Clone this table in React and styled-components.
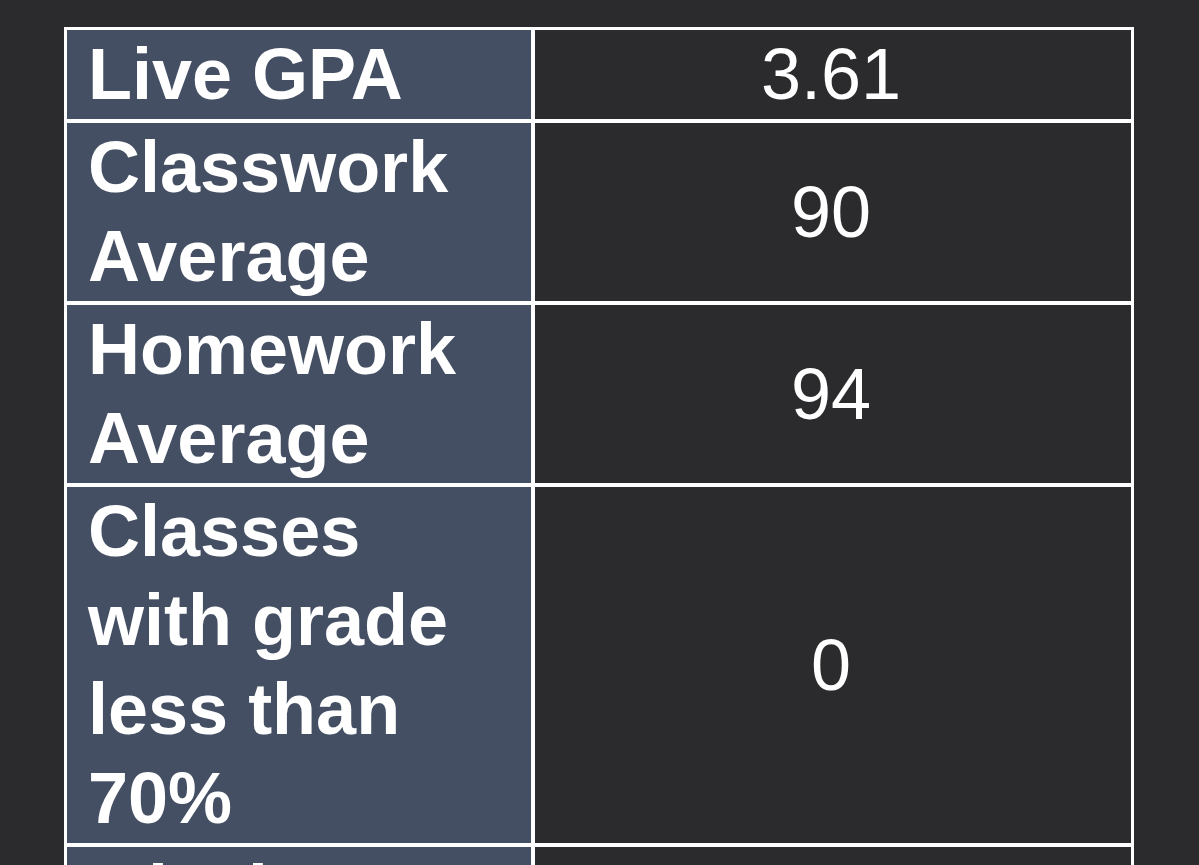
import React from "react";
import styled, { createGlobalStyle } from "styled-components";

const Global = createGlobalStyle`
  html, body {
    margin: 0;
    padding: 0;
    background: #2b2b2d;
  }
  body {
    font-family: "Liberation Sans", Arial, Helvetica, sans-serif;
    color: #ffffff;
  }
`;

const Page = styled.main`
  padding: 27px 0 0 64px;
  height: 865px;
  overflow: hidden;
  box-sizing: border-box;
`;

const Table = styled.div`
  display: grid;
  grid-template-columns: 464px 596px;
  gap: 4px;
  padding: 3px;
  width: max-content;
  background: #ffffff;
`;

const LabelCell = styled.div`
  background: #444f63;
  font-weight: 700;
  font-size: 72px;
  line-height: 89px;
  padding: 0 16px 0 21px;
  color: #ffffff;
`;

const ValueCell = styled.div`
  background: #2b2b2d;
  font-weight: 400;
  font-size: 72px;
  line-height: 89px;
  display: flex;
  align-items: center;
  justify-content: center;
  padding-right: 4px;
  color: #ffffff;
`;

const rows = [
  { label: ["Live GPA"], value: "3.61" },
  { label: ["Classwork", "Average"], value: "90" },
  { label: ["Homework", "Average"], value: "94" },
  { label: ["Classes", "with grade", "less than", "70%"], value: "0" },
  { label: ["Missing", "Assignments"], value: "0" },
];

export default function App() {
  return (
    <>
      <Global />
      <Page>
        <Table>
          {rows.map((r, i) => (
            <React.Fragment key={i}>
              <LabelCell>
                {r.label.map((l, j) => (
                  <div key={j}>{l}</div>
                ))}
              </LabelCell>
              <ValueCell>{r.value}</ValueCell>
            </React.Fragment>
          ))}
        </Table>
      </Page>
    </>
  );
}
